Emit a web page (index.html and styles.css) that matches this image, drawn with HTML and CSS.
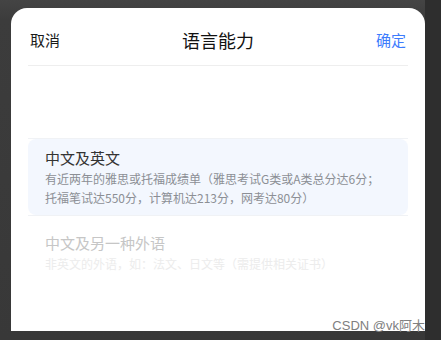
FILE: index.html
```html
<!DOCTYPE html>
<html lang="zh">
<head>
<meta charset="utf-8">
<link rel="stylesheet" href="styles.css">
</head>
<body>
<div class="screen">
  <div class="panel">
    <div class="header">
      <span class="btn cancel">取消</span>
      <span class="title">语言能力</span>
      <span class="btn ok">确定</span>
    </div>
    <div class="picker">
      <div class="selected">
        <div class="option active">
          <div class="opt-title">中文及英文</div>
          <div class="opt-desc">有近两年的雅思或托福成绩单（雅思考试G类或A类总分达6分；托福笔试达550分，计算机达213分，网考达80分）</div>
        </div>
      </div>
      <div class="option dim">
        <div class="opt-title">中文及另一种外语</div>
        <div class="opt-desc">非英文的外语，如：法文、日文等（需提供相关证书）</div>
      </div>
    </div>
  </div>
  <div class="side"></div>
  <div class="watermark">CSDN @vk阿木</div>
</div>
</body>
</html>
```
FILE: styles.css
```css
html, body {
  margin: 0;
  padding: 0;
}
body {
  width: 441px;
  height: 340px;
  overflow: hidden;
  background: #3b3b3b;
  font-family: "Noto Sans CJK SC", "Noto Sans", sans-serif;
}
.screen {
  position: relative;
  display: flex;
  height: 340px;
  background: linear-gradient(to bottom, #444444 0, #3c3c3c 20px, #383838 100%);
}
.panel {
  margin: 8px 0 9px 11px;
  width: 414px;
  background: #ffffff;
  border-radius: 16px 16px 0 0;
  padding: 0 17px;
  box-sizing: border-box;
}
.side {
  flex: 1;
  background: #2e2e2e;
}
.header {
  display: flex;
  align-items: center;
  justify-content: space-between;
  height: 51px;
  padding-top: 6px;
  border-bottom: 1px solid #eeeeee;
}
.btn {
  font-size: 15px;
  padding: 0 2px;
}
.cancel {
  color: #1a1a1a;
}
.ok {
  color: #3d7cfd;
  padding-right: 2px;
}
.title {
  font-size: 18px;
  color: #111111;
}
.picker {
  padding-top: 72px;
}
.selected {
  border-top: 1px solid #f0f2f5;
  border-bottom: 1px solid #f0f2f5;
}
.option {
  padding: 8px 17px 8px;
  border-radius: 8px;
}
.active {
  background: #f3f7fe;
}
.opt-title {
  font-size: 15px;
  line-height: 22px;
}
.opt-desc {
  font-size: 12px;
  line-height: 19px;
}
.active .opt-title {
  color: #333333;
}
.active .opt-desc {
  color: #8c8f95;
}
.dim {
  margin-top: 8px;
}
.dim .opt-title {
  color: #c6c6c6;
}
.dim .opt-desc {
  color: #ececec;
}
.watermark {
  position: absolute;
  right: 16px;
  top: 315px;
  font-family: "Liberation Sans", "Noto Sans CJK SC", sans-serif;
  font-size: 13px;
  color: #808080;
  white-space: nowrap;
}
```
